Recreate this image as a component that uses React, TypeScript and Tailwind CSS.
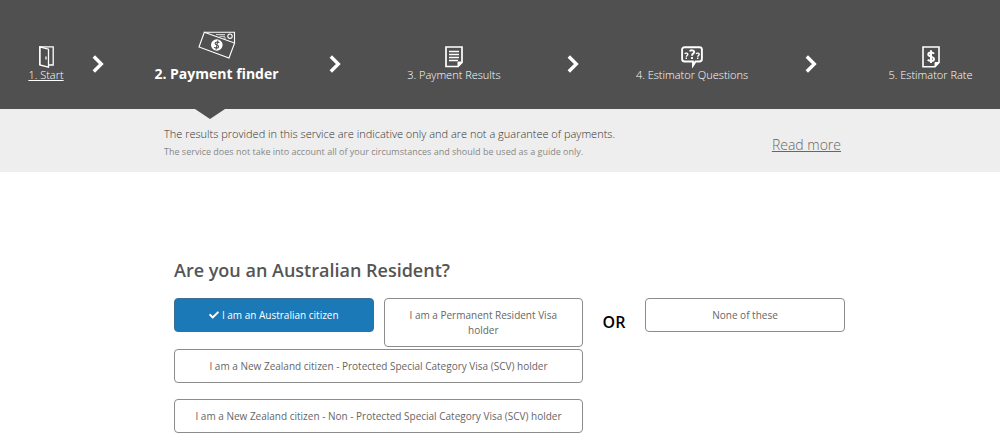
import React, { useState } from 'react';
import { FaCheck } from 'react-icons/fa';

function DoorIcon() {
  return (
    <svg width="15" height="22" viewBox="0 0 15 22" fill="none" stroke="currentColor" strokeWidth="1.3">
      <path d="M.8 19V.8h13.4V19H10" />
      <path d="M.8.8 9.5 3.2v18L.8 19z" />
      <path d="M7 10.5v3" />
    </svg>
  );
}

function MoneyIcon() {
  return (
    <svg width="38" height="28" viewBox="0 0 38 28" fill="none" stroke="currentColor" strokeWidth="1.1">
      <path d="M6.3 1.2 36.6 12 31 27 1 16z" />
      <path d="M6.3 1.2h30.2V12" />
      <path d="M18 3.6h9M21.5 5.3h5.5M25.5 7h2.5" strokeWidth=".8" />
      <circle cx="32" cy="5.2" r="2.2" />
      <circle cx="18.8" cy="14" r="5.8" fill="currentColor" stroke="none" />
      <path
        d="M21.3 12c-.8-1.3-4-1.3-4.2.3-.2 2 3.8 1.5 3.5 3.6-.3 1.7-3.7 1.4-4.4.1M19.9 9.3 18 18.7"
        stroke="#505050"
        strokeWidth="1.1"
      />
    </svg>
  );
}

function PageIcon() {
  return (
    <svg width="18" height="22" viewBox="0 0 18 22" fill="none" stroke="currentColor">
      <path d="M1 1h16v15.5L13 20.500H1z" strokeWidth="1.7" />
      <path d="M17 16h-4v4.5z" fill="currentColor" strokeWidth="1" />
      <path d="M4 5.500h10M4 8.500h10M4 11.500h10M4 14.500h9" strokeWidth="1.4" />
    </svg>
  );
}

function QuestionsIcon() {
  return (
    <svg width="22" height="22" viewBox="0 0 22 22" fill="none" stroke="currentColor">
      <path
        d="M3.5 1.2h15a2.4 2.4 0 0 1 2.4 2.4v9.500a2.4 2.4 0 0 1-2.4 2.4H14.500L12 19.500V15.500H3.500a2.4 2.4 0 0 1-2.4-2.4V3.600a2.4 2.4 0 0 1 2.4-2.4z"
        strokeWidth="1.9"
      />
      <path d="M8.800 5.300c.7-1.500 4.400-1.300 4.400.6 0 1.700-2.200 1.700-2.200 3.800M11 11v2" strokeWidth="1.9" />
      <path d="M3.800 7.800c.6-1.100 3-.9 3 .5 0 1.200-1.500 1.200-1.500 2.500M5.300 11.600v1.500" strokeWidth="1.4" />
      <path d="M15.200 7.800c.6-1.100 3-.9 3 .5 0 1.200-1.500 1.200-1.500 2.500M16.700 11.600v1.500" strokeWidth="1.4" />
      <path d="M12 16h3l-3 4z" fill="currentColor" stroke="none" />
    </svg>
  );
}

function RateIcon() {
  return (
    <svg width="18" height="22" viewBox="0 0 18 22" fill="none" stroke="currentColor">
      <path d="M1 1h16v15.500L13 20.800H1z" strokeWidth="1.6" />
      <path d="M17 16.500h-4v4z" fill="currentColor" strokeWidth="1" />
      <path
        d="M12 7.700c-1-1.500-5.700-1.700-5.700.8s5.700 1.700 5.700 4.400-4.900 2.500-6.200.7M9 4.300v12.700"
        strokeWidth="2"
      />
    </svg>
  );
}

function Chevron() {
  return (
    <svg
      className="mt-[55px]"
      width="12"
      height="18"
      viewBox="0 0 12 18"
      fill="none"
      stroke="currentColor"
      strokeWidth="3.4"
      aria-hidden="true"
    >
      <path d="m1.800 1.500 7.500 7.500-7.500 7.500" />
    </svg>
  );
}

function Step({ icon, label }: { icon: React.ReactNode; label: string }) {
  return (
    <div className="flex flex-col items-center pt-[46px] text-[11px] leading-[14px] font-light whitespace-nowrap">
      {icon}
      <span>{label}</span>
    </div>
  );
}

function Option({
  label,
  selected,
  onClick,
  className = '',
}: {
  label: string;
  selected: boolean;
  onClick: () => void;
  className?: string;
}) {
  return (
    <button
      type="button"
      aria-pressed={selected}
      onClick={onClick}
      className={`rounded border px-4 pt-[9px] pb-2 text-[10px] leading-[15px] ${
        selected ? 'border-[#3d6f92] bg-[#1b79b8] text-white' : 'border-[#8c8c8c] bg-white text-[#666]'
      } ${className}`}
    >
      {selected && <FaCheck className="mr-[3px] inline size-[10px] align-[-1px]" />}
      {label}
    </button>
  );
}

export default function App() {
  const [answer, setAnswer] = useState('citizen');

  return (
    <div className="min-h-screen bg-white font-['Open_Sans',sans-serif]">
      <nav className="grid h-[109px] grid-cols-[92fr_12px_225fr_12px_226fr_12px_226fr_12px_183fr] bg-[#505050] text-white">
        <a
          href="#start"
          className="flex flex-col items-center pt-[46px] text-[11px] leading-[14px] font-light underline"
        >
          <DoorIcon />
          1. Start
        </a>
        <Chevron />
        <div className="relative flex flex-col items-center pt-[31px] text-sm leading-5 font-bold whitespace-nowrap">
          <MoneyIcon />
          <span className="mt-[5px]">2. Payment finder</span>
          {/* Pointer under the active step */}
          <svg className="absolute top-[109px] right-[104px]" width="30" height="10" viewBox="0 0 30 10">
            <path d="M0 0h30L15 10z" fill="#505050" />
          </svg>
        </div>
        <Chevron />
        <Step icon={<PageIcon />} label="3. Payment Results" />
        <Chevron />
        <Step icon={<QuestionsIcon />} label="4. Estimator Questions" />
        <Chevron />
        <div className="pl-[44px]">
          <Step icon={<RateIcon />} label="5. Estimator Rate" />
        </div>
      </nav>

      <section className="flex h-[63px] items-center bg-[#eee] pr-[159px] pl-[164px]">
        <div className="flex-1 pt-1">
          <p className="text-[11px] leading-[18px] font-light text-[#333]">
            The results provided in this service are indicative only and are not a guarantee of payments.
          </p>
          <p className="text-[9px] leading-[18px] text-[#888]">
            The service does not take into account all of your circumstances and should be used as a guide only.
          </p>
        </div>
        <a href="#more" className="mt-2 text-sm font-light text-[#666] underline">
          Read more
        </a>
      </section>

      <main className="pt-[86px] pr-[155px] pl-[174px]">
        <h1 className="text-lg leading-6 font-semibold text-[#555]">Are you an Australian Resident?</h1>
        <div className="mt-4 grid grid-cols-[409fr_62px_200fr] items-start">
          <div className="grid grid-cols-2 gap-x-[10px]">
            <Option
              label="I am an Australian citizen"
              selected={answer === 'citizen'}
              onClick={() => setAnswer('citizen')}
              className="self-start"
            />
            <Option
              label="I am a Permanent Resident Visa holder"
              selected={answer === 'permanent'}
              onClick={() => setAnswer('permanent')}
            />
            <Option
              label="I am a New Zealand citizen - Protected Special Category Visa (SCV) holder"
              selected={answer === 'protected'}
              onClick={() => setAnswer('protected')}
              className="col-span-2 mt-0.5"
            />
            <Option
              label="I am a New Zealand citizen - Non - Protected Special Category Visa (SCV) holder"
              selected={answer === 'non-protected'}
              onClick={() => setAnswer('non-protected')}
              className="col-span-2 mt-4"
            />
          </div>
          <span className="pt-3 text-center text-base leading-6 font-semibold text-black">OR</span>
          <Option
            label="None of these"
            selected={answer === 'none'}
            onClick={() => setAnswer('none')}
          />
        </div>
      </main>
    </div>
  );
}
